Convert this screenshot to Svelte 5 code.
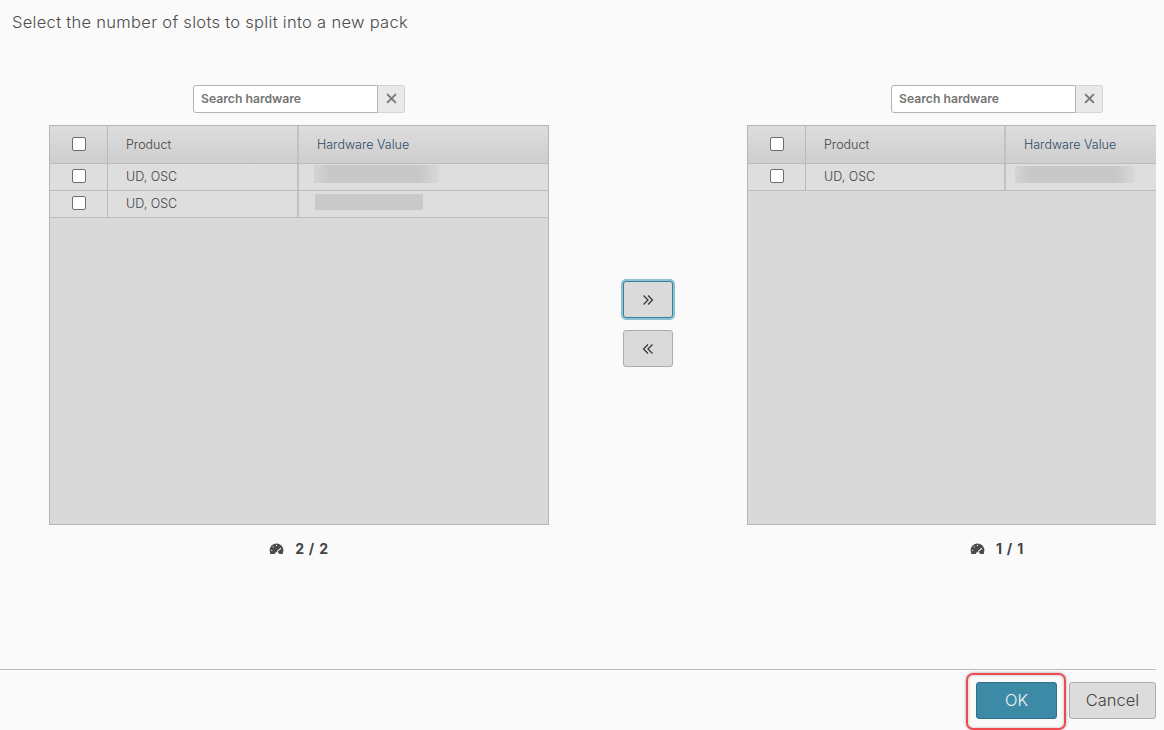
<script>
	const panels = [
		{
			productWidth: 191,
			rows: [
				{ width: 125, height: 18, top: -5, left: -1, soft: true },
				{ width: 108, height: 16, top: -4, left: 0 }
			],
			count: '2 / 2'
		},
		{
			productWidth: 200,
			rows: [{ width: 120, height: 17, top: -5, left: -7, soft: true }],
			count: '1 / 1'
		}
	];
</script>

{#snippet gauge()}
	<svg class="gauge" viewBox="0 0 16 12" width="15" height="11" aria-hidden="true">
		<path d="M0.5 8 A7.5 7.5 0 0 1 15.5 8 L14.8 12 L1.2 12 Z" fill="#4a4a4a" />
		<path d="M8.5 9.5 L13 5.5" stroke="#fafafa" stroke-width="1.2" />
		<path d="M6.2 12 A2.3 2.3 0 0 1 10.8 12 Z" fill="#fafafa" />
		<circle cx="2.8" cy="8" r="0.7" fill="#fafafa" />
		<circle cx="4.5" cy="4.2" r="0.7" fill="#fafafa" />
		<circle cx="8" cy="2.6" r="0.7" fill="#fafafa" />
	</svg>
{/snippet}

{#snippet panel(p)}
	<section class="panel">
		<div class="search">
			<input type="text" placeholder="Search hardware" />
			<button class="clear" aria-label="Clear">
				<svg viewBox="0 0 10 10" width="11" height="11">
					<path d="M1 1 L9 9 M9 1 L1 9" stroke="#777" stroke-width="1.7" />
				</svg>
			</button>
		</div>
		<div class="table">
			<div class="row head">
				<div class="c check"><span class="box"></span></div>
				<div class="c product" style="width:{p.productWidth}px">Product</div>
				<div class="c value">Hardware Value</div>
			</div>
			{#each p.rows as r}
				<div class="row">
					<div class="c check"><span class="box"></span></div>
					<div class="c product" style="width:{p.productWidth}px">UD, OSC</div>
					<div class="c value">
						<span class="redact" class:soft={r.soft} style="width:{r.width}px;height:{r.height}px;margin:{r.top}px 0 0 {r.left}px"></span>
					</div>
				</div>
			{/each}
		</div>
		<div class="count">{@render gauge()}<b>{p.count}</b></div>
	</section>
{/snippet}

<div class="dialog">
	<p class="title">Select the number of slots to split into a new pack</p>
	<div class="body">
		{@render panel(panels[0])}
		<div class="moves">
			<button class="move focus" aria-label="Move right">
				<svg viewBox="0 0 12 12" width="12" height="12">
					<path d="M1.5 1.5 L6 6 L1.5 10.5 M6 1.5 L10.5 6 L6 10.5" fill="none" stroke="#333" stroke-width="1.2" />
				</svg>
			</button>
			<button class="move" aria-label="Move left">
				<svg viewBox="0 0 12 12" width="12" height="12">
					<path d="M10.5 1.5 L6 6 L10.5 10.5 M6 1.5 L1.5 6 L6 10.5" fill="none" stroke="#333" stroke-width="1.2" />
				</svg>
			</button>
		</div>
		{@render panel(panels[1])}
	</div>
	<footer>
		<button class="btn ok">OK<span class="mark"></span></button>
		<button class="btn cancel">Cancel</button>
	</footer>
</div>

<style>
	:global(body) {
		margin: 0;
		background: #fafafa;
		font-family: Inter, Lato, sans-serif;
	}
	.dialog {
		width: 1156px;
		height: 730px;
		background: #fafafa;
		overflow: hidden;
		display: flex;
		flex-direction: column;
		color: #565656;
	}
	.title {
		margin: 0;
		padding: 12px 12px 0;
		height: 73px;
		box-sizing: border-box;
		font-size: 16.5px;
		font-weight: 300;
		line-height: 20px;
		letter-spacing: 0.3px;
		color: #4c4c4c;
	}
	.body {
		display: flex;
		align-items: flex-start;
		padding-left: 49px;
		height: 597px;
		box-sizing: border-box;
		border-bottom: 1px solid #bdbdbd;
		flex: none;
		overflow: hidden;
	}
	.panel {
		width: 500px;
		flex: none;
		display: flex;
		flex-direction: column;
		align-items: center;
	}
	.search {
		display: flex;
		height: 28px;
		width: 212px;
		margin: 12px 0;
	}
	.search input {
		width: 185px;
		box-sizing: border-box;
		border: 1px solid #b4b4b4;
		border-radius: 3px 0 0 3px;
		padding: 0 7px 2px;
		font: 600 12.2px Inter, sans-serif;
		background: #fff;
		outline: none;
	}
	.search input::placeholder {
		color: #747474;
		opacity: 1;
	}
	.clear {
		width: 27px;
		padding: 0 0 2px;
		border: 1px solid #d4d4d4;
		border-left: 0;
		border-radius: 0 3px 3px 0;
		background: #e9e9e9;
		display: flex;
		align-items: center;
		justify-content: center;
	}
	.table {
		width: 500px;
		height: 400px;
		box-sizing: border-box;
		background: #d9d9d9;
		border: 1px solid #b5b5b5;
	}
	.row {
		display: flex;
		height: 27px;
		background: #dedede;
		border-bottom: 1px solid #bcbcbc;
		box-sizing: border-box;
		font-size: 12.5px;
		font-weight: 300;
		color: #444;
	}
	.row.head {
		height: 38px;
		background: linear-gradient(#dddddd, #cecece);
	}
	.c {
		display: flex;
		align-items: center;
		box-sizing: border-box;
		padding-bottom: 1px;
	}
	.check {
		width: 58px;
		justify-content: center;
		border-right: 1px solid #b9b9b9;
		padding-bottom: 2px;
	}
	.box {
		width: 12px;
		height: 12px;
		background: #fff;
		border: 1px solid #6d6d6d;
		border-radius: 2px;
	}
	.product {
		padding-left: 18px;
		border-right: 2px solid #c2c2c2;
	}
	.value {
		flex: 1;
		padding-left: 16px;
	}
	.head .value {
		padding-left: 18px;
		color: #2f4a66;
	}
	.redact {
		display: block;
		background: #c9c9c9;
	}
	.redact.soft {
		background: linear-gradient(90deg, #d4d4d4, #c8c8c8 12%, #c8c8c8 85%, #d9d9d9);
	}
	.count {
		margin-top: 14px;
		height: 18px;
		display: flex;
		align-items: center;
		gap: 11px;
		font-size: 14px;
		letter-spacing: 0.8px;
		color: #444;
	}
	.moves {
		width: 198px;
		flex: none;
		display: flex;
		flex-direction: column;
		align-items: center;
		gap: 12px;
		padding-top: 208px;
	}
	.move {
		width: 50px;
		height: 37px;
		box-sizing: border-box;
		background: #dadada;
		border: 1px solid #acacac;
		border-radius: 3px;
		padding: 0;
		display: flex;
		align-items: center;
		justify-content: center;
	}
	.move.focus {
		border-color: #3a7f9e;
		box-shadow: 0 0 0 2px #8fc0d2;
	}
	footer {
		display: flex;
		justify-content: flex-end;
		gap: 12px;
		padding-top: 12px;
	}
	.btn {
		height: 37px;
		box-sizing: border-box;
		border-radius: 3px;
		font: 300 16.5px Inter, sans-serif;
		padding: 0 0 2px;
	}
	.ok {
		width: 81px;
		background: #3c8aa6;
		border: 1px solid #2f6f88;
		color: #eef4f6;
		position: relative;
	}
	.cancel {
		width: 87px;
		background: #dcdcdc;
		border: 1px solid #ababab;
		color: #444;
	}
	.mark {
		position: absolute;
		left: -11px;
		top: -10px;
		width: 100px;
		height: 57px;
		box-sizing: border-box;
		border: 2.5px solid #ee4a4f;
		border-radius: 7px;
		box-shadow: 0 0 3px rgba(0, 0, 0, 0.35), inset 0 0 3px rgba(0, 0, 0, 0.25);
	}
</style>
